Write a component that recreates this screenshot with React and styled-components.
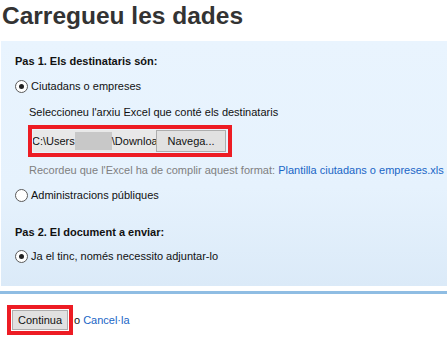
import React from "react";
import styled, { createGlobalStyle } from "styled-components";

const Global = createGlobalStyle`
  html, body { margin: 0; padding: 0; background: #fff; }
  body { font-family: "Liberation Sans", Arial, sans-serif; font-size: 11px; color: #222; overflow: hidden; }
`;

const Page = styled.div`
  width: 447px;
`;

const Title = styled.h1`
  margin: 0 0 11px 0;
  padding: 2px 0 0 2px;
  font-size: 24.5px;
  line-height: 28px;
  font-weight: bold;
  color: #333;
`;

const Panel = styled.div`
  margin-left: 1px;
  padding: 13px 0 23px 14px;
  background: linear-gradient(to bottom, #e9f4fe 0%, #e6f2fd 60%, #dbeaf8 100%);
  display: flex;
  flex-direction: column;
`;

const StepTitle = styled.div`
  font-weight: bold;
  line-height: 14px;
  margin-top: ${(p) => p.$mt || 0}px;
  color: #111;
`;

const RadioRow = styled.label`
  display: flex;
  align-items: center;
  gap: 3px;
  line-height: 14px;
  margin-top: ${(p) => p.$mt || 0}px;
  color: #111;
`;

const Radio = styled.span`
  box-sizing: border-box;
  flex-shrink: 0;
  width: 13px;
  height: 13px;
  border-radius: 50%;
  border: 1px solid #5a5a5a;
  background: #fff;
  display: inline-flex;
  align-items: center;
  justify-content: center;
  &::after {
    content: "";
    width: 5px;
    height: 5px;
    border-radius: 50%;
    background: ${(p) => (p.$checked ? "#222" : "transparent")};
  }
`;

const Indented = styled.div`
  margin-left: 14px;
  margin-top: ${(p) => p.$mt || 0}px;
  line-height: 14px;
  white-space: nowrap;
  color: ${(p) => (p.$muted ? "#808080" : "#111")};
`;

const Highlight = styled.div`
  display: inline-flex;
  align-self: flex-start;
  flex-shrink: 0;
  border: 4px solid #ed1c24;
  padding: 1px ${(p) => p.$pr || 1}px 1px 1px;
  margin-left: ${(p) => p.$ml || 0}px;
  margin-top: ${(p) => p.$mt || 0}px;
`;

const FileField = styled.div`
  box-sizing: border-box;
  width: 123px;
  height: 22px;
  line-height: 22px;
  background: #e8e8e8;
  overflow: hidden;
  white-space: nowrap;
  color: #111;
  text-indent: -1px;
`;

const Redacted = styled.span`
  display: inline-block;
  vertical-align: middle;
  width: 37px;
  height: 18px;
  background: #c8c8c8;
  margin-top: -2px;
`;

const Button = styled.div`
  box-sizing: border-box;
  flex-shrink: 0;
  width: ${(p) => p.$w}px;
  height: ${(p) => p.$h}px;
  background: #e1e1e1;
  border: 1px solid #adadad;
  display: flex;
  align-items: center;
  justify-content: center;
  color: #111;
  font-size: 11px;
`;

const Link = styled.a`
  color: #1a66c6;
  text-decoration: none;
`;

const Divider = styled.div`
  height: 3px;
  background: #8fbde3;
  margin-top: 5px;
`;

const Footer = styled.div`
  display: flex;
  align-items: center;
  margin: 11px 0 0 7px;
  color: #111;
`;

const Or = styled.span`
  margin: 0 3px 0 1px;
`;

export default function App() {
  return (
    <Page>
      <Global />
      <Title>Carregueu les dades</Title>
      <Panel>
        <StepTitle>Pas 1. Els destinataris són:</StepTitle>
        <RadioRow $mt={11}>
          <Radio $checked />
          Ciutadans o empreses
        </RadioRow>
        <Indented $mt={12}>Seleccioneu l'arxiu Excel que conté els destinataris</Indented>
        <Highlight $ml={13} $mt={6} $pr={2}>
          <FileField>
            C:\Users
            <Redacted />\Downloads\destinataris.xls
          </FileField>
          <Button $w={70} $h={22}>Navega...</Button>
        </Highlight>
        <Indented $mt={6} $muted>
          Recordeu que l'Excel ha de complir aquest format:{" "}
          <Link href="#">Plantilla ciutadans o empreses.xls</Link>
        </Indented>
        <RadioRow $mt={11}>
          <Radio />
          Administracions públiques
        </RadioRow>
        <StepTitle $mt={23}>Pas 2. El document a enviar:</StepTitle>
        <RadioRow $mt={10}>
          <Radio $checked />
          Ja el tinc, només necessito adjuntar-lo
        </RadioRow>
      </Panel>
      <Divider />
      <Footer>
        <Highlight>
          <Button $w={56} $h={20}>Continua</Button>
        </Highlight>
        <Or>o</Or>
        <Link href="#">Cancel·la</Link>
      </Footer>
    </Page>
  );
}
